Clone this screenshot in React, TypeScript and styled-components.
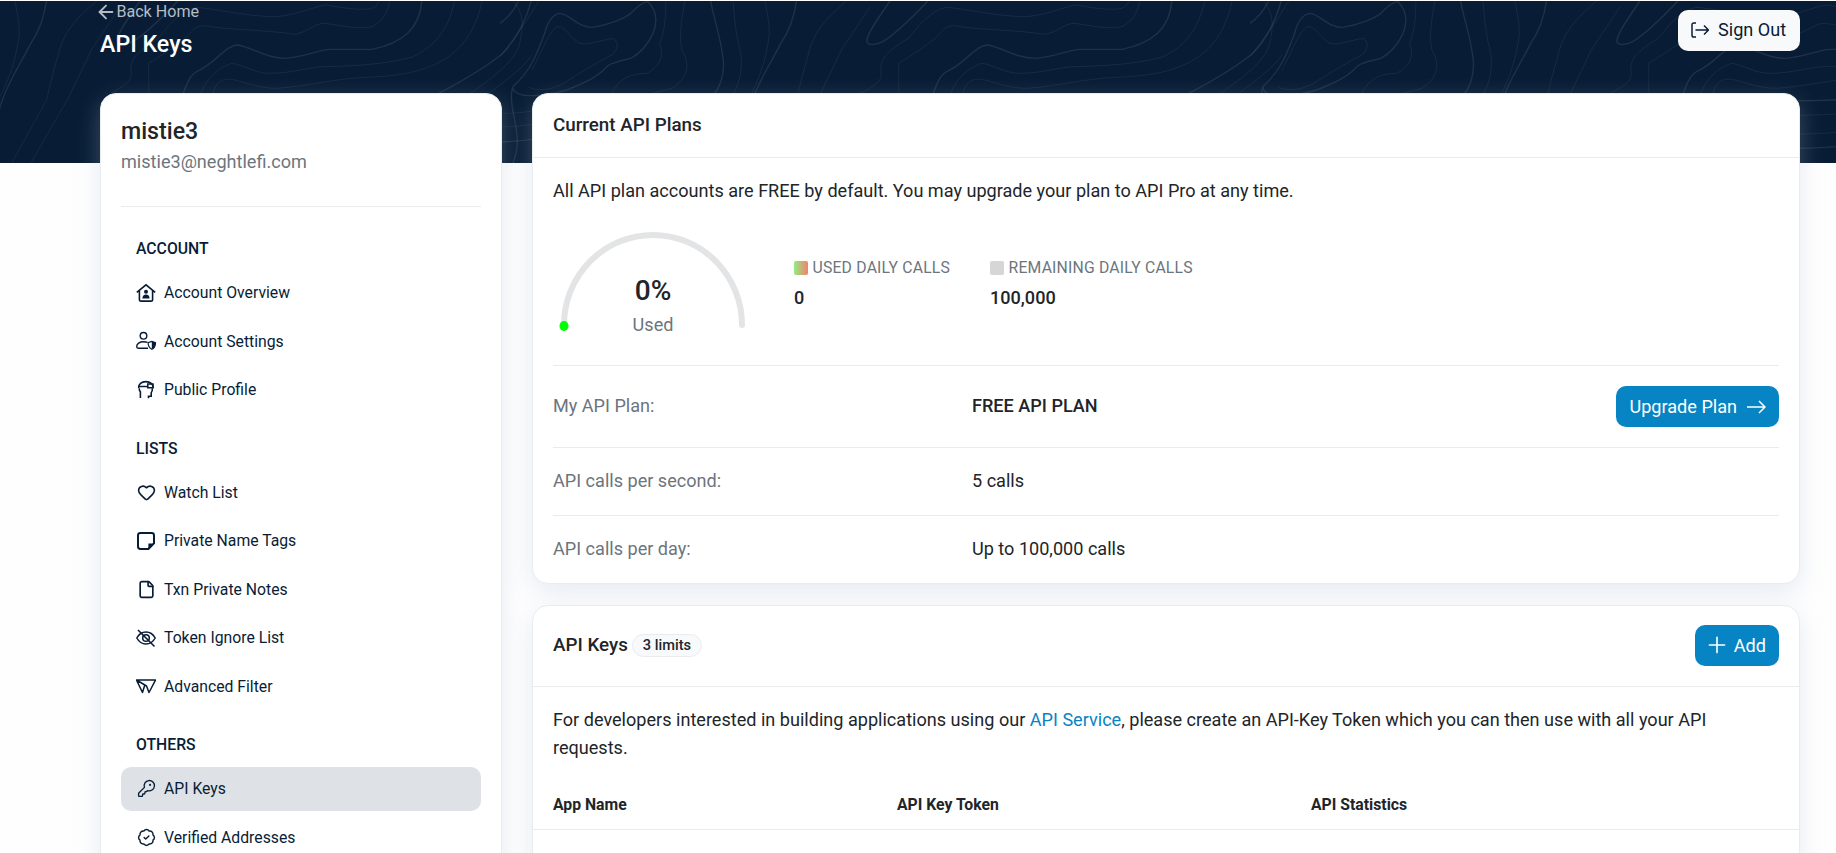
import React from 'react';
import styled, { createGlobalStyle } from 'styled-components';
import { ArrowLeft, BadgeCheck, File, Heart, KeyRound, Plus } from 'lucide-react';

const GlobalStyle = createGlobalStyle`
  html, body {
    margin: 0;
    background: #fefefe;
  }
  body {
    font-family: Roboto, "Liberation Sans", sans-serif;
    font-size: 18.08px;
    color: #212529;
  }
  * {
    box-sizing: border-box;
  }
`;

const contourLines = [
  'M20 490 C40 400 10 330 20 260 C50 210 60 150 70 100 C75 60 85 40 95 40 C110 45 125 85 145 82 C170 75 195 55 205 40 C215 20 225 5 232 5 C245 30 248 60 240 100 C230 140 215 165 205 175 C185 185 170 190 165 205 C150 235 130 250 105 270 C80 285 50 290 35 285 C25 280 20 270 20 260',
  'M50 210 C65 160 75 100 88 82 C100 70 110 115 125 130 C140 138 165 115 178 116 C186 125 186 150 175 165 C150 190 120 225 100 250 C80 270 60 275 45 262',
  'M0 170 C20 120 40 70 55 20 L62 0',
  'M0 70 C15 50 25 20 30 0',
  'M260 0 C260 50 258 100 250 130 C258 170 250 200 230 220 C205 222 190 230 175 280 L160 490',
  'M290 0 C285 60 280 100 285 150 C298 190 296 230 270 265 C250 275 240 280 215 290 L180 490',
  'M330 0 C335 60 345 100 350 180 C352 230 345 260 335 285 L320 490',
  'M365 0 C368 60 370 110 375 140 C382 190 378 240 365 285 L350 490',
  'M415 0 C420 50 425 90 420 130 C415 190 405 240 392 290 L330 490',
  'M465 0 C462 40 455 90 440 130 C425 190 405 240 392 320 L370 490',
  'M545 0 C515 50 495 85 485 150 C478 200 470 250 465 300 L410 490',
  'M580 20 C560 80 545 120 535 150 C520 210 510 250 500 290 L440 490',
  'M612 0 C595 50 575 100 575 125 C578 138 590 135 600 125 C625 95 650 45 672 0',
  'M565 280 C590 255 600 240 597 215 C595 180 605 155 640 115 C655 80 675 30 700 22 C725 25 780 50 825 50 C860 45 890 15 905 15 C930 25 960 32 975 25 C985 15 985 8 985 0',
  'M625 285 L625 190 C640 170 670 140 690 100 C698 80 705 75 715 78 C750 90 800 88 855 103 C875 95 885 70 900 70 C925 75 950 90 975 80 C995 60 1000 30 1003 0',
  'M678 285 C685 250 690 225 700 215 C730 190 745 135 765 135 C790 145 810 175 840 175 C870 170 890 150 910 148 L975 148 C1020 130 1050 90 1053 0',
  'M705 285 C715 240 730 205 755 190 C775 195 790 220 815 220 C850 220 880 200 900 200 C950 198 1000 192 1040 170 C1080 130 1095 80 1105 0',
  'M725 285 C730 245 740 235 755 238 C775 245 795 265 825 265 C870 260 920 235 965 232 C1020 228 1060 215 1095 170 C1125 130 1140 70 1148 0',
  'M1075 285 C1120 240 1155 200 1180 160 C1200 120 1215 70 1225 0',
  'M1125 285 C1160 240 1195 190 1205 140 C1212 90 1215 40 1195 0',
  'M1155 285 C1185 240 1215 200 1225 165',
  'M830 300 C880 310 950 290 1020 295',
  'M830 345 C880 350 950 335 1020 340',
  'M830 400 C880 410 950 385 1020 395',
  'M830 445 C880 450 950 430 1020 435',
  'M-30 335 C0 345 30 340 60 330',
  'M-30 375 C0 385 30 380 60 370',
  'M-30 420 C0 430 30 425 60 415',
];

function TopoLines() {
  return (
    <Topo aria-hidden="true" preserveAspectRatio="none">
      {[-1, 0, 1, 2].map((tile) => (
        <g
          key={tile}
          transform={`translate(${500 + tile * 750} -1) scale(0.638 0.3333)`}
        >
          {contourLines.map((d, i) => (
            <path
              key={i}
              d={d}
              fill="none"
              stroke="#fff"
              strokeOpacity={i % 3 === 0 ? 0.09 : 0.06}
              strokeWidth={i % 3 === 0 ? 1.4 : 1}
              vectorEffect="non-scaling-stroke"
            />
          ))}
        </g>
      ))}
    </Topo>
  );
}

const HouseUserIcon = () => (
  <NavSvg viewBox="0 0 20 20">
    <path d="M.8 9.400 10 1.800l9.200 7.600M3.400 7.600v8.800c0 1 .7 1.700 1.700 1.700h9.800c1 0 1.700-.7 1.700-1.700V7.600" fill="none" stroke="currentColor" strokeWidth="1.600" />
    <circle cx="10" cy="8.700" r="2" fill="currentColor" />
    <path d="M6.400 15.400c0-2.400 1.600-3.800 3.600-3.800s3.600 1.400 3.600 3.800z" fill="currentColor" />
  </NavSvg>
);

const UserShieldIcon = () => (
  <NavSvg viewBox="0 0 20 20">
    <circle cx="7.500" cy="4.800" r="3.300" fill="none" stroke="currentColor" strokeWidth="1.400" />
    <path d="M11.500 11.300c-1.200-.4-2.500-.6-4-.6-3.900 0-6.800 2-6.800 4.900 0 1 .5 1.600 1.500 1.600H12" fill="none" stroke="currentColor" strokeWidth="1.400" />
    <path d="M15.800 10.400l3.700 1.200c0 3.400-1.200 5.500-3.700 6.700-2.500-1.200-3.700-3.300-3.700-6.700z" fill="none" stroke="currentColor" strokeWidth="1.200" />
    <path d="M15.800 10.400l3.700 1.200c0 3.400-1.200 5.500-3.700 6.700z" fill="currentColor" />
  </NavSvg>
);

const ProfileIcon = () => (
  <NavSvg viewBox="0 0 20 20">
    <path d="M2.600 8C2.400 4 5.400 1.600 9.800 1.600c4.400 0 7.600 2.400 7.400 6.400" fill="none" stroke="currentColor" strokeWidth="1.600" />
    <path d="M2.400 6.600h9.400M11.800 4h5.200v3.800h-5.200z" fill="none" stroke="currentColor" strokeWidth="1.500" />
    <path d="M3.200 8.200c0 1.800.4 2.700 1.200 3.500v6.200M16.400 8.200c0 2.400-.4 3.800-1.200 4.600v3.400h-2.700v2" fill="none" stroke="currentColor" strokeWidth="1.600" />
  </NavSvg>
);

const NoteIcon = () => (
  <NavSvg viewBox="0 0 20 20">
    <path d="M18 12.400V4.400C18 3 17 2 15.600 2H4.400C3 2 2 3 2 4.400v11.200C2 17 3 18 4.400 18h8z" fill="none" stroke="currentColor" strokeWidth="2" strokeLinejoin="round" />
    <path d="M12.400 18v-5.600H18z" fill="currentColor" />
  </NavSvg>
);

const EyeOffIcon = () => (
  <NavSvg viewBox="0 0 20 20">
    <path d="M.8 10C3 6 6.200 4 10 4s7 2 9.200 6c-2.200 4-5.400 6-9.200 6S3 14 .8 10z" fill="none" stroke="currentColor" strokeWidth="1.500" />
    <circle cx="10" cy="10" r="3.300" fill="none" stroke="currentColor" strokeWidth="1.500" />
    <path d="M2 2l16.500 16.500" fill="none" stroke="currentColor" strokeWidth="1.600" />
  </NavSvg>
);

const FilterIcon = () => (
  <NavSvg viewBox="0 0 20 20">
    <path d="M.5 4H19.500L13 16.500 10.500 10 .5 4 6.500 16.500 8.800 9" fill="none" stroke="currentColor" strokeWidth="1.500" strokeLinejoin="round" />
  </NavSvg>
);

const LongArrow = () => (
  <svg width="19" height="14" viewBox="0 0 19 14">
    <path d="M0 7h18M12 1l6 6-6 6" fill="none" stroke="currentColor" strokeWidth="1.500" />
  </svg>
);

const SignOutIcon = () => (
  <svg width="18" height="16" viewBox="0 0 18 16">
    <path d="M5 1H2.800C1.600 1 1 1.600 1 2.800v10.400C1 14.400 1.600 15 2.800 15H5M4.500 8h13M13 3.500 17.500 8 13 12.500" fill="none" stroke="currentColor" strokeWidth="1.500" />
  </svg>
);

const navSections = [
  {
    title: 'ACCOUNT',
    items: [
      { label: 'Account Overview', icon: <HouseUserIcon /> },
      { label: 'Account Settings', icon: <UserShieldIcon /> },
      { label: 'Public Profile', icon: <ProfileIcon /> },
    ],
  },
  {
    title: 'LISTS',
    items: [
      { label: 'Watch List', icon: <Heart size={19} strokeWidth={2} /> },
      { label: 'Private Name Tags', icon: <NoteIcon /> },
      { label: 'Txn Private Notes', icon: <File size={19} strokeWidth={2.100} /> },
      { label: 'Token Ignore List', icon: <EyeOffIcon /> },
      { label: 'Advanced Filter', icon: <FilterIcon /> },
    ],
  },
  {
    title: 'OTHERS',
    items: [
      { label: 'API Keys', icon: <KeyRound size={19} strokeWidth={1.700} />, active: true },
      { label: 'Verified Addresses', icon: <BadgeCheck size={19} strokeWidth={1.800} /> },
    ],
  },
];

const planRows = [
  { label: 'API calls per second:', value: '5 calls', height: 68 },
  { label: 'API calls per day:', value: 'Up to 100,000 calls', height: 67 },
];

export default function App() {
  return (
    <Page>
      <GlobalStyle />
      <Hero>
        <TopoLines />
        <HeroInner>
          <div>
            <BackLink>
              <BackArrow size={22} strokeWidth={2} /> Back Home
            </BackLink>
            <Title>API Keys</Title>
          </div>
          <SignOut>
            <SignOutIcon />
            Sign Out
          </SignOut>
        </HeroInner>
      </Hero>

      <Content>
        <Sidebar>
          <UserName>mistie3</UserName>
          <UserEmail>mistie3@neghtlefi.com</UserEmail>
          <SideDivider />
          {navSections.map((section) => (
            <NavSection key={section.title}>
              <NavTitle>{section.title}</NavTitle>
              {section.items.map((item) => (
                <NavItem key={item.label} $active={item.active}>
                  <NavIcon>{item.icon}</NavIcon>
                  {item.label}
                </NavItem>
              ))}
            </NavSection>
          ))}
        </Sidebar>

        <Main>
          <Card>
            <CardHeader>
              <CardTitle>Current API Plans</CardTitle>
            </CardHeader>
            <CardBody>
              <Intro>
                All API plan accounts are FREE by default. You may upgrade your
                plan to API Pro at any time.
              </Intro>
              <UsageRow>
                <Gauge>
                  <svg width="198" height="104" viewBox="0 0 198 104">
                    <path
                      d="M10 94 A 89 90 0 0 1 188 94"
                      fill="none"
                      stroke="#e3e4e6"
                      strokeWidth="6"
                      strokeLinecap="round"
                    />
                    <ellipse cx="10" cy="95" rx="4.500" ry="5" fill="#00ff00" />
                  </svg>
                  <GaugeLabel>
                    <GaugeValue>0%</GaugeValue>
                    <GaugeCaption>Used</GaugeCaption>
                  </GaugeLabel>
                </Gauge>
                <LegendList>
                  <LegendItem $width={196}>
                    <LegendLabel>
                      <Swatch $fill="linear-gradient(90deg, #8fee80, #f5806f)" />
                      USED DAILY CALLS
                    </LegendLabel>
                    <LegendValue>0</LegendValue>
                  </LegendItem>
                  <LegendItem $width={240}>
                    <LegendLabel>
                      <Swatch $fill="#d6d6d6" />
                      REMAINING DAILY CALLS
                    </LegendLabel>
                    <LegendValue>100,000</LegendValue>
                  </LegendItem>
                </LegendList>
              </UsageRow>

              <PlanRow $height={82}>
                <PlanLabel>My API Plan:</PlanLabel>
                <PlanValue $strong>FREE API PLAN</PlanValue>
                <PrimaryButton>
                  Upgrade Plan
                  <LongArrow />
                </PrimaryButton>
              </PlanRow>
              {planRows.map((row) => (
                <PlanRow key={row.label} $height={row.height}>
                  <PlanLabel>{row.label}</PlanLabel>
                  <PlanValue>{row.value}</PlanValue>
                </PlanRow>
              ))}
            </CardBody>
          </Card>

          <KeysCard>
            <KeysHeader>
              <CardTitle>API Keys</CardTitle>
              <LimitBadge>3 limits</LimitBadge>
              <PrimaryButton>
                <PlusIcon size={26} strokeWidth={1.500} />
                Add
              </PrimaryButton>
            </KeysHeader>
            <KeysIntro>
              For developers interested in building applications using our{' '}
              <TextLink>API Service</TextLink>, please create an API-Key Token
              which you can then use with all your API requests.
            </KeysIntro>
            <TableHead>
              <span>App Name</span>
              <span>API Key Token</span>
              <span>API Statistics</span>
            </TableHead>
          </KeysCard>
        </Main>
      </Content>
    </Page>
  );
}

const Page = styled.div`
  height: 853px;
  overflow: hidden;
  padding-top: 1px;
`;

const Hero = styled.header`
  position: relative;
  height: 162px;
  background: #081d35;
  overflow: hidden;
`;

const Topo = styled.svg`
  position: absolute;
  inset: 0;
  width: 100%;
  height: 100%;
`;

const HeroInner = styled.div`
  position: relative;
  display: flex;
  justify-content: space-between;
  align-items: flex-start;
  padding: 0 36px 0 100px;
`;

const BackLink = styled.a`
  display: flex;
  align-items: center;
  height: 21px;
  font-size: 16.100px;
  color: #b4bcc6;
`;

const BackArrow = styled(ArrowLeft)`
  margin: 0 -1px 0 -4.600px;
`;

const Title = styled.h1`
  margin: 9px 0 0;
  font-size: 23.200px;
  line-height: 26px;
  font-weight: 500;
  color: #fff;
`;

const SignOut = styled.button`
  display: flex;
  align-items: center;
  gap: 9px;
  height: 41px;
  width: 122px;
  margin-top: 9px;
  padding: 0 0 2px 13px;
  border: 0;
  border-radius: 10px;
  background: #f8f9fa;
  color: #081d35;
  font: inherit;
`;

const Content = styled.div`
  display: grid;
  grid-template-columns: 402px 1268px;
  gap: 30px;
  margin-top: -70px;
  padding-left: 100px;
  position: relative;
`;

const Card = styled.section`
  background: #fff;
  border: 1px solid #e9ecef;
  border-radius: 16px;
  box-shadow: 0 8px 24px rgba(180, 190, 215, 0.3);
`;

const Sidebar = styled(Card)`
  padding: 22px 20px 20px;
`;

const UserName = styled.div`
  font-size: 23.200px;
  line-height: 30px;
  font-weight: 500;
`;

const UserEmail = styled.div`
  margin-top: 3px;
  line-height: 26px;
  color: #6c757d;
`;

const SideDivider = styled.hr`
  margin: 31px 0 31px;
  border: 0;
  border-top: 1px solid #e9ecef;
`;

const NavSection = styled.nav`
  display: flex;
  flex-direction: column;
  gap: 4.500px;
  margin-bottom: 26px;
`;

const NavTitle = styled.div`
  padding-left: 15px;
  margin-bottom: 6px;
  font-size: 15.750px;
  line-height: 22px;
  font-weight: 500;
  color: #081d35;
`;

const NavItem = styled.a<{ $active?: boolean }>`
  display: flex;
  align-items: center;
  height: 44px;
  padding-left: 15px;
  border-radius: 10px;
  font-size: 15.750px;
  color: #081d35;
  background: ${(p) => (p.$active ? '#dee2e6' : 'transparent')};
`;

const NavIcon = styled.span`
  display: flex;
  justify-content: center;
  width: 20px;
  margin-right: 8px;
`;

const NavSvg = styled.svg`
  width: 20px;
  height: 20px;
`;

const Main = styled.div`
  display: flex;
  flex-direction: column;
  gap: 21px;
`;

const CardHeader = styled.div`
  display: flex;
  align-items: center;
  height: 64px;
  padding: 0 20px 2px;
  border-bottom: 1px solid #e9ecef;
`;

const CardTitle = styled.h2`
  margin: 0;
  font-size: 18.800px;
  font-weight: 500;
`;

const CardBody = styled.div`
  padding: 20px 20px 0;
`;

const Intro = styled.p`
  margin: 0;
  line-height: 26px;
`;

const UsageRow = styled.div`
  display: flex;
  align-items: flex-start;
  height: 162px;
  padding-top: 27px;
  border-bottom: 1px solid #e9ecef;
`;

const Gauge = styled.div`
  position: relative;
  width: 240px;
  margin-left: 1px;
  flex: none;
`;

const GaugeLabel = styled.div`
  position: absolute;
  top: 42px;
  left: 0;
  width: 198px;
  text-align: center;
`;

const GaugeValue = styled.div`
  font-size: 28px;
  line-height: 36px;
  font-weight: 500;
`;

const GaugeCaption = styled.div`
  margin-top: 2px;
  line-height: 28px;
  color: #6c757d;
`;

const LegendList = styled.div`
  display: flex;
  padding-top: 26px;
`;

const LegendItem = styled.div<{ $width: number }>`
  width: ${(p) => p.$width}px;
`;

const LegendLabel = styled.div`
  display: flex;
  align-items: center;
  gap: 4.500px;
  font-size: 15.750px;
  line-height: 22px;
  letter-spacing: 0.2px;
  color: #6c757d;
`;

const Swatch = styled.i<{ $fill: string }>`
  width: 14px;
  height: 14px;
  border-radius: 2px;
  background: ${(p) => p.$fill};
`;

const LegendValue = styled.div`
  margin-top: 7px;
  font-weight: 500;
  line-height: 24px;
`;

const PlanRow = styled.div<{ $height: number }>`
  display: flex;
  align-items: center;
  height: ${(p) => p.$height}px;
  border-bottom: 1px solid #e9ecef;

  &:last-child {
    border-bottom: 0;
  }
`;

const PlanLabel = styled.div`
  width: 419px;
  padding-bottom: 2px;
  color: #6c757d;
`;

const PlanValue = styled.div<{ $strong?: boolean }>`
  padding-bottom: 2px;
  font-weight: ${(p) => (p.$strong ? 500 : 400)};
`;

const PrimaryButton = styled.button`
  display: flex;
  align-items: center;
  gap: 10px;
  height: 41px;
  margin-left: auto;
  padding: 0 13px;
  border: 0;
  border-radius: 10px;
  background: #0784c3;
  color: #fff;
  font: inherit;
`;

const PlusIcon = styled(Plus)`
  margin: 0 -6px 0 -4px;
`;

const KeysCard = styled(Card)`
  flex: 1;
`;

const KeysHeader = styled.div`
  display: flex;
  align-items: center;
  height: 81px;
  padding: 0 20px 2px;
  border-bottom: 1px solid #e9ecef;
`;

const LimitBadge = styled.span`
  margin-left: 4px;
  padding: 0 10px;
  height: 23px;
  line-height: 21px;
  border: 1px solid #e9ecef;
  border-radius: 12px;
  background: #f8f9fa;
  font-size: 14.600px;
  font-weight: 500;
`;

const KeysIntro = styled.p`
  margin: 0;
  padding: 19px 20px 0;
  line-height: 28px;
`;

const TextLink = styled.a`
  color: #0784c3;
`;

const TableHead = styled.div`
  display: grid;
  grid-template-columns: 344px 414px 1fr;
  align-items: center;
  height: 51px;
  margin-top: 17px;
  padding: 1px 20px 0;
  border-bottom: 1px solid #e9ecef;
  font-size: 15.750px;
  font-weight: 700;
`;
